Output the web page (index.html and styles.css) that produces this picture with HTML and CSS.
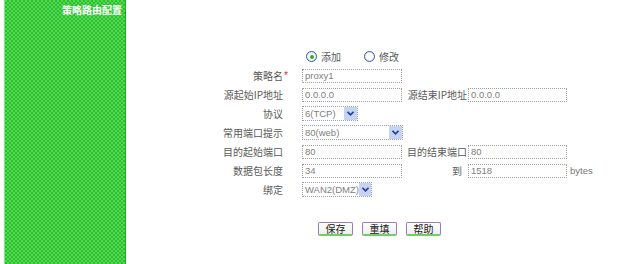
FILE: index.html
```html
<!DOCTYPE html>
<html>
<head>
<meta charset="utf-8">
<link rel="stylesheet" href="styles.css">
</head>
<body>
<div class="page">
  <aside class="side">
    <div class="side-title">策略路由配置</div>
  </aside>
  <main class="main">
    <div class="form">
      <div class="cell"></div><div class="cell"></div>
      <div class="cell radios">
        <span class="radio on"></span><span class="rtext">添加</span>
        <span class="radio second"></span><span class="rtext">修改</span>
      </div>
      <div class="cell"></div><div class="cell"></div>

      <div class="cell lbl">策略名</div><div class="cell star">*</div>
      <div class="cell"><span class="inp w100">proxy1</span></div>
      <div class="cell"></div><div class="cell"></div><div class="cell"></div>

      <div class="cell lbl">源起始IP地址</div><div class="cell"></div>
      <div class="cell"><span class="inp w100">0.0.0.0</span></div>
      <div class="cell lbl2">源结束IP地址</div>
      <div class="cell"><span class="inp w99">0.0.0.0</span></div>
      <div class="cell"></div>

      <div class="cell lbl">协议</div><div class="cell"></div>
      <div class="cell"><span class="sel w56"><span class="stext">6(TCP)</span><span class="arrow"><svg width="7" height="5" viewBox="0 0 7 5"><path d="M0.5 0.8 L3.5 3.8 L6.5 0.8" fill="none" stroke="#1f3f9f" stroke-width="1.6"/></svg></span></span></div>
      <div class="cell"></div><div class="cell"></div><div class="cell"></div>

      <div class="cell lbl">常用端口提示</div><div class="cell"></div>
      <div class="cell"><span class="sel w101"><span class="stext">80(web)</span><span class="arrow"><svg width="7" height="5" viewBox="0 0 7 5"><path d="M0.5 0.8 L3.5 3.8 L6.5 0.8" fill="none" stroke="#1f3f9f" stroke-width="1.6"/></svg></span></span></div>
      <div class="cell"></div><div class="cell"></div><div class="cell"></div>

      <div class="cell lbl">目的起始端口</div><div class="cell"></div>
      <div class="cell"><span class="inp w100">80</span></div>
      <div class="cell lbl2">目的结束端口</div>
      <div class="cell"><span class="inp w99">80</span></div>
      <div class="cell"></div>

      <div class="cell lbl">数据包长度</div><div class="cell"></div>
      <div class="cell"><span class="inp w100">34</span></div>
      <div class="cell lbl2 to">到</div>
      <div class="cell"><span class="inp w99">1518</span></div>
      <div class="cell unit">bytes</div>

      <div class="cell lbl">绑定</div><div class="cell"></div>
      <div class="cell"><span class="sel w70"><span class="stext">WAN2(DMZ)</span><span class="arrow"><svg width="7" height="5" viewBox="0 0 7 5"><path d="M0.5 0.8 L3.5 3.8 L6.5 0.8" fill="none" stroke="#1f3f9f" stroke-width="1.6"/></svg></span></span></div>
      <div class="cell"></div><div class="cell"></div><div class="cell"></div>
    </div>
    <div class="buttons">
      <button class="btn">保存</button>
      <button class="btn">重填</button>
      <button class="btn">帮助</button>
    </div>
  </main>
</div>
</body>
</html>
```
FILE: styles.css
```css
html, body {
  margin: 0;
  padding: 0;
  background: #fff;
}
body {
  font-family: "Liberation Sans", "Noto Sans CJK SC", sans-serif;
  font-size: 10px;
  color: #5a5a5a;
}
.page {
  display: flex;
  width: 641px;
  height: 264px;
  overflow: hidden;
}
.side {
  margin-left: 4px;
  width: 122px;
  height: 264px;
  flex: none;
  box-sizing: border-box;
  border-left: 1px solid #7fe07f;
  border-right: 1px solid #22aa22;
  background-color: #3acb3a;
  background-image: repeating-conic-gradient(#2ebf2e 0 25%, #52d852 0 50%);
  background-size: 4px 4px;
}
.side-title {
  color: #fff;
  font-weight: bold;
  font-size: 10px;
  text-align: right;
  padding: 3px 3px 0 0;
  line-height: 14px;
  font-family: "Noto Sans CJK SC", sans-serif;
}
.main {
  flex: 1;
  padding-top: 47px;
}
.form {
  display: grid;
  grid-template-columns: 83px 19px 102px 64px 101px 1fr;
  grid-auto-rows: 19px;
  margin-left: 74px;
}
.cell {
  display: flex;
  align-items: center;
  white-space: nowrap;
  min-width: 0;
}
.lbl {
  justify-content: flex-end;
  font-family: "Noto Sans CJK SC", sans-serif;
}
.lbl2 {
  justify-content: flex-end;
  padding-right: 1px;
  font-family: "Noto Sans CJK SC", sans-serif;
}
.lbl2.to {
  padding-right: 6px;
}
.star {
  color: #e02020;
  font-size: 10px;
  padding-left: 1px;
  padding-bottom: 1px;
}
.radios {
  grid-column: 3 / 5;
  padding-left: 4px;
}
.radio {
  width: 9px;
  height: 9px;
  border-radius: 50%;
  border: 1px solid #3a5a9a;
  background: radial-gradient(circle, #ffffff 0 40%, #dce3f2 80%);
  position: relative;
  flex: none;
}
.radio.on::after {
  content: "";
  position: absolute;
  left: 2.5px;
  top: 2.5px;
  width: 4px;
  height: 4px;
  border-radius: 50%;
  background: #2cb02c;
}
.radio.second {
  margin-left: 23px;
}
.rtext {
  margin-left: 4px;
  font-family: "Noto Sans CJK SC", sans-serif;
}
.inp {
  display: block;
  flex: none;
  box-sizing: border-box;
  height: 14px;
  border: 1px dotted #a0a0a0;
  padding-left: 2px;
  line-height: 12px;
  font-size: 9.5px;
  color: #808080;
  background: #fff;
}
.w100 { width: 100px; }
.w99 { width: 99px; }
.w56 { width: 56px; }
.w101 { width: 101px; }
.w70 { width: 70px; }
.sel {
  display: flex;
  flex: none;
  box-sizing: border-box;
  height: 15px;
  border: 1px dotted #9aa0b8;
  font-size: 9.5px;
  color: #808080;
  background: #fff;
}
.stext {
  flex: 1;
  padding-left: 2px;
  line-height: 13px;
}
.arrow {
  width: 13px;
  height: 13px;
  background: #c6d3f2;
  display: flex;
  align-items: center;
  justify-content: center;
}
.unit {
  padding-left: 1px;
  font-size: 9.5px;
  color: #777;
}
.buttons {
  display: flex;
  gap: 9px;
  margin-top: 23px;
  margin-left: 192px;
}
.btn {
  width: 35px;
  height: 14px;
  padding: 0;
  margin: 0;
  box-sizing: border-box;
  border: 1px solid #9a7cc4;
  border-bottom: 2px solid #6fcf5f;
  border-radius: 2px;
  background: linear-gradient(#ffffff, #eeeeee);
  font-family: "Noto Sans CJK SC", sans-serif;
  font-size: 10px;
  line-height: 11px;
  color: #222;
}
```
